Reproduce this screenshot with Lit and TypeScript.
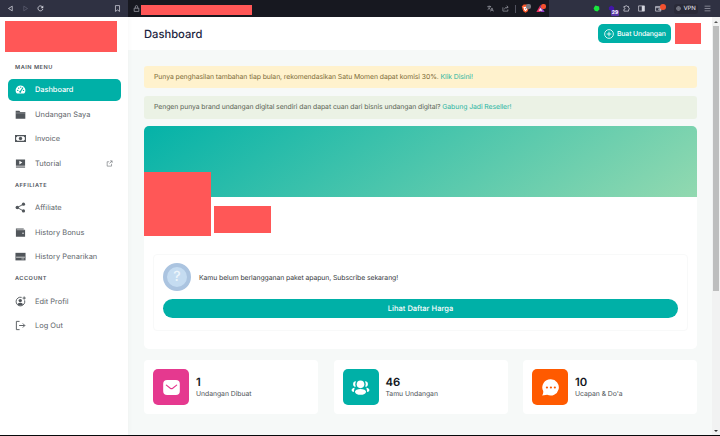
import { LitElement, html, css, svg } from "lit";
import { customElement } from "lit/decorators.js";
import { classMap } from "lit/directives/class-map.js";

const glyphs: Record<string, unknown> = {
  gauge: svg`<path fill="currentColor" d="M12 3.5A10.5 10.5 0 0 0 3 19.5q.5 1 1.700 1H19.300q1.200 0 1.700-1A10.500 10.500 0 0 0 12 3.500z"/><g fill="var(--cut)"><circle cx="6" cy="14" r="1.500"/><circle cx="8" cy="9" r="1.500"/><circle cx="12.500" cy="7" r="1.400"/><circle cx="18.500" cy="14" r="1.500"/></g><path d="M11.500 17L17 8.500" stroke="var(--cut)" stroke-width="2.200" stroke-linecap="round"/><circle cx="11.500" cy="16.800" r="2.200" fill="var(--cut)"/>`,
  folder: svg`<path fill="currentColor" d="M1.500 4h8l2 2.500h11V21h-21z"/><path d="M2 8.700h20" stroke="var(--cut)" stroke-width=".7"/>`,
  cash: svg`<path fill="currentColor" fill-rule="evenodd" d="M0 4.500h24v15H0zM5 7Q4.500 9 2.500 9.500v5Q4.500 15 5 17h14q.500-2 2.500-2.500v-5Q19.500 9 19 7z"/><circle cx="12" cy="12" r="3.700" fill="currentColor"/>`,
  video: svg`<path fill="currentColor" fill-rule="evenodd" d="M2 3h20v14H2zM9.500 6v8l6.500-4z"/><path fill="currentColor" d="M2 18.500h20V21H2z"/>`,
  external: svg`<path fill="none" stroke="currentColor" stroke-width="2" d="M11 6H4v15h15v-8M14 3h7v7M21 3l-9 9"/>`,
  share: svg`<path stroke="currentColor" stroke-width="2" fill="none" d="M19 4.500L5 12l14 8"/><g fill="currentColor"><circle cx="18.500" cy="4.700" r="3.500"/><circle cx="5" cy="12" r="3.700"/><circle cx="18.500" cy="19.500" r="3.500"/></g>`,
  wallet: svg`<path fill="currentColor" d="M2 3h17v2.300H4V6h18v15H2z"/><path fill="none" stroke="var(--cut)" stroke-width=".8" d="M3 6.300h18"/><circle cx="17.500" cy="13.500" r="1.500" fill="var(--cut)"/>`,
  card: svg`<path fill="currentColor" d="M1 4h22v16.500H1z"/><path stroke="var(--cut)" stroke-width="1.600" d="M2.500 13.500h19"/><path stroke="var(--cut)" stroke-width="1.200" d="M14 17.300h6"/>`,
  profile: svg`<path fill="none" stroke="currentColor" stroke-width="2" d="M14.500 3A9.500 9.500 0 1 0 21 9.500"/><circle cx="11.500" cy="10" r="3.700" fill="currentColor"/><path fill="currentColor" d="M5 18q6-6.500 13 0-6 5.500-13 0z"/><path stroke="currentColor" stroke-width="2" d="M20 1v7M16.500 4.500h7"/>`,
  logout: svg`<path fill="none" stroke="currentColor" stroke-width="2" d="M10 3H3v18h7M9 12h12M17 7.500l4.500 4.500-4.500 4.500"/>`,
  plus: svg`<g fill="none" stroke="currentColor" stroke-width="2"><circle cx="12" cy="12" r="10.500"/><path d="M12 6.500v11M6.500 12h11"/></g>`,
  mail: svg`<rect x="1.500" y="2.500" width="21" height="19" rx="5" fill="currentColor"/><path fill="none" stroke="var(--cut)" stroke-width="1.500" stroke-linecap="round" stroke-linejoin="round" d="M5.500 9l5 4q1.500 1.100 3 0l5-4"/>`,
  people: svg`<g fill="currentColor"><circle cx="12" cy="8" r="4.800"/><path d="M6.300 4.200a3.500 3.500 0 0 0-.3 7q-1.600-3.400.300-7zM17.700 4.200a3.500 3.500 0 0 1 .300 7q1.600-3.400-.300-7zM4.700 12.300q-4.200.700-4 3.200.300 2 3 2.300 0-2.800 1-5.500zM19.300 12.300q4.200.700 4 3.200-.300 2-3 2.300 0-2.800-1-5.500z"/><ellipse cx="12" cy="17.500" rx="7" ry="3.700"/></g>`,
  chat: svg`<path fill="currentColor" d="M12.500 1.500a10.300 10.300 0 1 1-4.700 19.600L1.500 22q1.700-2.500 1.300-5.500A10.300 10.300 0 0 1 12.500 1.500z"/><g fill="var(--cut)"><circle cx="7.500" cy="12" r="1.400"/><circle cx="12.500" cy="12" r="1.400"/><circle cx="17.500" cy="12" r="1.400"/></g>`,
  back: svg`<path fill="none" stroke="currentColor" stroke-width="2.600" stroke-linejoin="round" d="M18 4v16L5 12z"/>`,
  forward: svg`<path fill="none" stroke="currentColor" stroke-width="2" stroke-linejoin="round" d="M6 4v16l13-8z"/>`,
  reload: svg`<path fill="none" stroke="currentColor" stroke-width="3" d="M19 7a8.500 8.500 0 1 0 1 7"/><path fill="currentColor" d="M21.500 2v9h-9z"/>`,
  bookmark: svg`<path fill="none" stroke="currentColor" stroke-width="2.500" stroke-linejoin="round" d="M5 2h14v20l-7-5-7 5z"/>`,
  lock: svg`<path fill="none" stroke="currentColor" stroke-width="2.400" d="M4 11h16v11H4zM8 11V6q0-4 4-4t4 4v5"/>`,
  translate: svg`<path fill="none" stroke="currentColor" stroke-width="2.200" d="M1 5h13M7.500 2v3M12 5Q9 13 2 16M4 8q3 6 8 7M12 22l5-12 5 12M14 18h6.500"/>`,
  send: svg`<path fill="none" stroke="currentColor" stroke-width="2.200" d="M3 8v13h17v-6M8 15q1-8 13-8M16 2l5 5-5 5"/>`,
  shield: svg`<path fill="#fb5a2c" d="M7 1h10l2 3 3 1-1 5-3 9-6 4-6-4-3-9-1-5 3-1z"/><path fill="#fff" d="M6 7l4 1 2-1 2 1 4-1-2 6 0 2-4 4-4-4 0-2z"/><path fill="#fb5a2c" d="M10 11h4l-2 4z"/>`,
  rewards: svg`<path fill="#e72d5c" d="M12 2L1 21h11z"/><path fill="#8f3fc4" d="M12 2l11 19H12z"/><path fill="#f3edf7" d="M12 10l-5 8h10z"/>`,
  leaf: svg`<path fill="#19e83e" d="M8 2l13 3 1 10-7 7-9-2-4-9z"/>`,
  drop: svg`<path fill="#4317a8" d="M3 8l8-6 10 6v9l-10 3-8-4z"/>`,
  puzzle: svg`<path fill="none" stroke="currentColor" stroke-width="2.400" d="M3 5h5q0-3 3-3t3 3h5v5q3 0 3 3t-3 3v5H3v-6q4 0 4-3t-4-3z"/>`,
  panel: svg`<path fill="none" stroke="currentColor" stroke-width="2.400" d="M2 3h20v18H2z"/><path fill="currentColor" d="M13 3h9v18h-9z"/>`,
  purse: svg`<path fill="none" stroke="currentColor" stroke-width="2.400" d="M2 5h18v16H2zM2 9h18M13 13h7v4h-7z"/>`,
  globe: svg`<g fill="none" stroke="currentColor" stroke-width="2.600"><circle cx="12" cy="12" r="9"/><circle cx="12" cy="12" r="3.500"/></g>`,
  menu: svg`<path stroke="currentColor" stroke-width="2.400" d="M2 4h20M2 12h20M2 20h20"/>`,
};

const icon = (name: string, cls = "") =>
  html`<svg class="icon ${cls}" viewBox="0 0 24 24">${glyphs[name]}</svg>`;

const base = css`
  * { box-sizing: border-box; }
  .icon { display: block; flex: none; width: 11px; height: 11px; }
`;

@customElement("browser-bar")
class BrowserBar extends LitElement {
  static styles = [base, css`
    :host { display: flex; height: 17px; background: #2f3142; color: #d5d6df; }
    .nav { width: 128px; display: flex; align-items: center; padding: 0 3px 0 2.500px; }
    .slot { position: relative; width: 15px; height: 17px; display: flex; align-items: center; justify-content: center; flex: none; }
    .icon { width: 7px; height: 7px; }
    .dim { color: #696b7d; }
    .end { margin-left: auto; }
    .address { width: 421px; display: flex; align-items: center; background: #171820; color: #a6a7b1; padding-right: 1px; }
    .address .slot:first-child { width: 13px; padding-left: 3px; }
    .redacted { width: 111px; height: 10px; margin-top: 2px; background: #ff5757; }
    .rule { width: 1px; height: 8px; background: #51525f; margin: 0 2px; }
    .tools { flex: 1; display: flex; align-items: center; padding-left: 40px; }
    .big { width: 9px; height: 9px; }
    .badge { position: absolute; left: 8px; top: 4px; width: 5px; height: 5px; border-radius: 2px; background: #77787f; }
    .hot { background: #f4512e; }
    .count { width: 8px; height: 6px; left: 7px; top: 10px; border-radius: 1px; background: #5937a8; color: #fff; font-size: 5px; line-height: 6px; font-weight: 700; text-align: center; }
    .vpn { display: flex; align-items: center; gap: 2px; width: 24px; height: 10px; margin-left: 4px; justify-content: center; border-radius: 3px; background: #292a38; font-size: 6px; font-weight: 500; letter-spacing: -.2px; }
    .vpn .icon { width: 5px; height: 5px; }
    .wide { width: 21px; }
    .wide .icon { margin-right: 2px; }
    .wide .badge { left: 11px; top: 4px; width: 6px; height: 6px; border-radius: 3px; }
    .menu { margin-left: 2px; color: #a6a7b3; }
  `];
  render() {
    return html`
      <div class="nav">
        <span class="slot">${icon("back")}</span>
        <span class="slot dim">${icon("forward")}</span>
        <span class="slot">${icon("reload")}</span>
        <span class="slot end">${icon("bookmark")}</span>
      </div>
      <div class="address">
        <span class="slot">${icon("lock")}</span><span class="redacted"></span>
        <span class="slot end">${icon("translate")}</span>
        <span class="slot">${icon("send")}</span>
        <span class="rule"></span>
        <span class="slot">${icon("shield", "big")}<i class="badge"></i></span>
        <span class="slot">${icon("rewards", "big")}<i class="badge hot"></i></span>
      </div>
      <div class="tools">
        <span class="slot">${icon("leaf")}</span>
        <span class="slot">${icon("drop")}<span class="badge count">29</span></span>
        <span class="slot">${icon("puzzle")}</span>
        <span class="slot">${icon("panel")}</span>
        <span class="slot wide">${icon("purse")}<i class="badge hot"></i></span>
        <span class="vpn">${icon("globe")}VPN</span>
        <span class="slot menu">${icon("menu")}</span>
      </div>`;
  }
}

interface Item { icon: string; label: string; active?: boolean; external?: boolean; }
const menu: { title: string; items: Item[] }[] = [
  { title: "MAIN MENU", items: [
    { icon: "gauge", label: "Dashboard", active: true },
    { icon: "folder", label: "Undangan Saya" },
    { icon: "cash", label: "Invoice" },
    { icon: "video", label: "Tutorial", external: true },
  ] },
  { title: "AFFILIATE", items: [
    { icon: "share", label: "Affiliate" },
    { icon: "wallet", label: "History Bonus" },
    { icon: "card", label: "History Penarikan" },
  ] },
  { title: "ACCOUNT", items: [
    { icon: "profile", label: "Edit Profil" },
    { icon: "logout", label: "Log Out" },
  ] },
];

@customElement("side-menu")
class SideMenu extends LitElement {
  static styles = [base, css`
    :host { box-sizing: border-box; display: block; flex: none; width: 128px; padding: 4px 7px 0 7.500px; background: #fff; --cut: #fff; box-shadow: 0 0 5px rgba(60, 80, 80, .05); z-index: 1; }
    .logo { width: 112px; height: 31px; margin-left: -2.500px; background: #ff5757; }
    .title { height: 16px; margin: 0 0 3px 7.500px; font-size: 5.600px; line-height: 16px; font-weight: 600; letter-spacing: .5px; color: #50555b; }
    .first { margin-top: 7.500px; margin-bottom: 3px; }
    .group { display: grid; gap: 2px; margin-bottom: 3px; }
    .item { display: flex; align-items: center; width: 113.500px; height: 22.500px; padding: 0 8px 0 7.500px; border-radius: 5px; color: #61666b; font-size: 7.450px; }
    .label { margin-left: 9px; flex: 1; }
    .item > .icon:first-child { color: #51565b; }
    .active { background: #00b0a7; color: #fff; --cut: #00b0a7; font-weight: 500; letter-spacing: -.05px; }
    .active > .icon:first-child { color: #fff; }
    .out { width: 7px; height: 7px; }
  `];
  render() {
    return html`<div class="logo"></div>
      ${menu.map((g, i) => html`
        <div class=${classMap({ title: true, first: i === 0 })}>${g.title}</div>
        <nav class="group">${g.items.map((it) => html`
          <div class=${classMap({ item: true, active: !!it.active })}>
            ${icon(it.icon)}<span class="label">${it.label}</span>${it.external ? icon("external", "out") : ""}
          </div>`)}</nav>`)}`;
  }
}

const stats = [
  { tone: "pink", icon: "mail", value: "1", label: "Undangan Dibuat" },
  { tone: "teal", icon: "people", value: "46", label: "Tamu Undangan" },
  { tone: "orange", icon: "chat", value: "10", label: "Ucapan & Do'a" },
];

@customElement("app-root")
class AppRoot extends LitElement {
  static styles = [base, css`
    :host { box-sizing: border-box; display: flex; flex-direction: column; height: 436px; overflow: hidden; font-family: Inter, sans-serif; text-rendering: geometricPrecision; background: #f6f9f8; border-bottom: 1px solid #08090b; }
    .body { flex: 1; min-height: 0; display: flex; }
    .page { width: 584px; display: flex; flex-direction: column; }
    .head { display: flex; align-items: center; height: 33px; padding: 0 11px 0 16px; background: #fff; flex: none; }
    .head h1 { margin: 0; font-size: 11.200px; font-weight: 500; color: #1c2540; flex: 1; line-height: 14px; padding-top: 1px; }
    .create { display: flex; align-items: center; gap: 3px; width: 73px; height: 19.500px; padding-left: 6px; margin-right: 4px; border-radius: 5px; background: #00b0a7; color: #fff; font-size: 6.850px; letter-spacing: -.12px; font-weight: 500; white-space: nowrap; }
    .create .icon { width: 10px; height: 10px; }
    .user { width: 26px; height: 21px; background: #ff5757; }
    .content { padding: 16px 15px 0 16px; }
    .note { height: 22px; padding-left: 10px; border-radius: 3px; background: #fff2cd; color: #7c6b37; font-size: 6.850px; letter-spacing: -.07px; line-height: 22px; white-space: nowrap; }
    .note b { font-weight: 400; color: #2ab5a2; }
    .soft { margin: 8px 0 7px; height: 23px; line-height: 22px; background: #ebf2e5; color: #5a6354; }
    .profile { height: 223px; border-radius: 5px; background: #fff; }
    .cover { height: 71px; border-radius: 5px 5px 0 0; background: linear-gradient(145deg, #04b2a8, #92d9b0); }
    .identity { display: flex; align-items: flex-end; gap: 3px; height: 64px; margin-top: -25px; }
    .avatar { width: 67px; height: 64px; background: #ff5757; }
    .name { width: 57px; height: 27px; margin-bottom: 3px; background: #ff5757; }
    .plan { height: 77px; margin: 17.500px 9px 0; padding: 8.500px 9px; border: 1px solid #f8f9f9; border-radius: 4px; }
    .status { display: flex; align-items: center; gap: 8px; height: 28px; color: #34373b; font-size: 6.850px; letter-spacing: -.07px; }
    .question { width: 28px; height: 28px; border: 4px solid #abc4e0; border-radius: 50%; background: #c5dcf1; color: #edf5fb; font-size: 14px; line-height: 20px; font-weight: 500; text-align: center; }
    .prices { height: 19.500px; margin-top: 7.500px; border-radius: 10px; background: #00b0a7; color: #fff; font-size: 7.550px; line-height: 19.500px; font-weight: 500; text-align: center; }
    .stats { display: grid; grid-template-columns: repeat(3, 174px); justify-content: space-between; margin-top: 11px; }
    .stat { display: flex; align-items: center; gap: 7px; height: 54px; padding-left: 9px; border-radius: 4px; background: #fff; }
    .tile { width: 36px; height: 36px; display: grid; place-items: center; border-radius: 5px; color: #fff; background: var(--cut); }
    .tile .icon { width: 19px; height: 19px; }
    .pink { --cut: #e5398f; }
    .teal { --cut: #00b0a7; }
    .orange { --cut: #ff5a00; }
    .value { font-size: 11.300px; line-height: 13px; font-weight: 600; color: #131722; }
    .caption { font-size: 6.850px; letter-spacing: -.05px; line-height: 10px; color: #4e5358; }
    .scroll { width: 8px; display: flex; flex-direction: column; align-items: center; justify-content: space-between; background: #f1f2f2; padding: 4px 0 3px; }
    .up, .down { border: 2px solid transparent; border-top: 0; border-bottom: 2px solid #555; flex: none; }
    .down { border-bottom: 0; border-top: 2px solid #333; }
    .thumb { width: 6px; height: 265px; margin: 3px 0 auto; background: #bdbebe; }
  `];
  render() {
    return html`
      <browser-bar></browser-bar>
      <div class="body">
        <side-menu></side-menu>
        <main class="page">
          <header class="head"><h1>Dashboard</h1><div class="create">${icon("plus")}<span>Buat Undangan</span></div><div class="user"></div></header>
          <div class="content">
            <div class="note">Punya penghasilan tambahan tiap bulan, rekomendasikan Satu Momen dapat komisi 30%. <b>Klik Disini!</b></div>
            <div class="note soft">Pengen punya brand undangan digital sendiri dan dapat cuan dari bisnis undangan digital? <b>Gabung Jadi Reseller!</b></div>
            <section class="profile">
              <div class="cover"></div>
              <div class="identity"><div class="avatar"></div><div class="name"></div></div>
              <div class="plan">
                <div class="status"><span class="question">?</span><span>Kamu belum berlangganan paket apapun, Subscribe sekarang!</span></div>
                <div class="prices">Lihat Daftar Harga</div>
              </div>
            </section>
            <section class="stats">${stats.map((s) => html`
              <div class="stat"><div class="tile ${s.tone}">${icon(s.icon)}</div>
                <div><div class="value">${s.value}</div><div class="caption">${s.label}</div></div></div>`)}
            </section>
          </div>
        </main>
        <div class="scroll"><i class="up"></i><i class="thumb"></i><i class="down"></i></div>
      </div>`;
  }
}
